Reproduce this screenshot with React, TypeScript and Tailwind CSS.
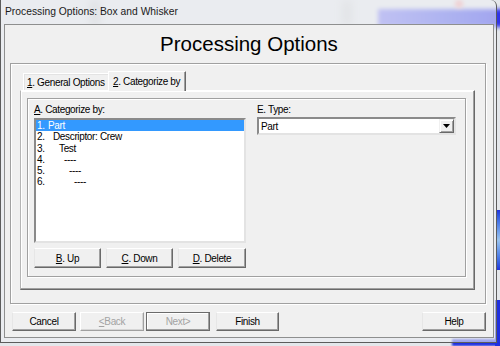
import React from "react";

// list rows in "A. Categorize by"
const rows = [
  { n: "1.", text: "Part", indent: "pl-0", selected: true },
  { n: "2.", text: "Descriptor: Crew", indent: "pl-[5px]", selected: false },
  { n: "3.", text: "Test", indent: "pl-[11px]", selected: false },
  { n: "4.", text: "----", indent: "pl-[16px]", selected: false },
  { n: "5.", text: "----", indent: "pl-[21px]", selected: false },
  { n: "6.", text: "----", indent: "pl-[26px]", selected: false },
];

const Mn = ({ children }: { children: React.ReactNode }) => (
  <span className="underline underline-offset-[1px] decoration-[1px]">{children}</span>
);

const Btn = ({
  children,
  className = "",
  kind = "normal",
}: {
  children: React.ReactNode;
  className?: string;
  kind?: "normal" | "disabled" | "default";
}) => {
  const look =
    kind === "default"
      ? "border-[#6b6b6b] shadow-[inset_-1px_-1px_0_#a0a0a0,inset_1px_1px_0_#fff] text-[#a3a3a3]"
      : kind === "disabled"
      ? "border-t-white border-l-white border-r-[#a0a0a0] border-b-[#a0a0a0] shadow-[inset_-1px_-1px_0_#d6d6d6] text-[#a3a3a3]"
      : "border-t-white border-l-[#e6e6e6] border-r-[#696969] border-b-[#696969] shadow-[inset_-1px_-1px_0_#a0a0a0] text-black";
  return (
    <div
      className={`flex items-center justify-center bg-[#f0f0f0] border text-[10px] tracking-[-0.35px] ${look} ${className}`}
    >
      {children}
    </div>
  );
};

const App = () => {
  return (
    <div className="relative w-[500px] h-[346px] overflow-hidden bg-[#e4e7eb] font-['Liberation_Sans',Arial,sans-serif] text-black">
      {/* blurred desktop behind the glass frame */}
      <div className="absolute right-[-6px] top-[9px] w-[128px] h-[18px] bg-gradient-to-r from-[#7b7bf0] to-[#2d2de8] blur-[2px]" />
      <div className="absolute left-[90px] top-0 w-[10px] h-[26px] bg-[#c9cbce] blur-[4px]" />
      <div className="absolute left-[342px] top-0 w-[10px] h-[26px] bg-[#cfd1d3] blur-[4px]" />
      <div className="absolute left-[455px] top-0 w-[8px] h-[8px] rounded-full bg-[#f0a0a0] blur-[2px]" />
      <div className="absolute right-0 top-[210px] w-[4px] h-[60px] bg-gradient-to-b from-[#2233dd] via-[#9bc4ee] to-[#2233dd]" />
      <div className="absolute right-0 top-[300px] w-[5px] h-[46px] bg-[#1f2fe0]" />
      <div className="absolute right-0 bottom-0 w-[48px] h-[7px] bg-[#1f2fe0] blur-[1px]" />

      {/* window */}
      <div className="relative w-[497px] h-[343px] flex flex-col border-x border-b border-[#5c5c5c] rounded-tr-[6px] bg-[#eef0f3]/60">
        <div className="h-[24px] flex items-center pl-[4px] text-[10.3px] text-[#1a1a1a]">
          Processing Options: Box and Whisker
        </div>

        {/* dialog */}
        <div className="ml-[3px] w-[490px] h-[314px] border border-[#8e8f8f] bg-[#f0f0f0] flex flex-col">
          <div className="h-[38px] flex items-center justify-center text-[20.5px] pt-[1px]">
            Processing Options
          </div>

          {/* outer group box */}
          <div className="ml-[5px] w-[476px] h-[241px] border border-[#a0a0a0] shadow-[inset_1px_1px_0_#fff,1px_1px_0_#fff] flex flex-col">
            {/* tabs */}
            <div className="mt-[7px] h-[19px] ml-[9px] pl-[3px] flex items-end text-[10px] tracking-[-0.35px]">
              <div className="h-[17px] w-[85px] pl-[3px] flex items-center border-t border-l border-white shadow-[inset_1px_1px_0_#e3e3e3]">
                <Mn>1</Mn>. General Options
              </div>
              <div className="relative z-10 -mb-px h-[20px] w-[78px] pl-[4px] flex items-center bg-[#f0f0f0] border-t border-l border-r border-t-white border-l-white border-r-[#696969] shadow-[inset_-1px_0_0_#a0a0a0]">
                <Mn>2</Mn>. Categorize by
              </div>
            </div>

            {/* tab page */}
            <div className="ml-[9px] w-[455px] h-[200px] border border-t-white border-l-[#b4b4b4] border-r-[#696969] border-b-[#696969] shadow-[inset_-1px_-1px_0_#a0a0a0,inset_1px_1px_0_#fff]">
              <div className="ml-[6px] mt-[7px] w-[439px] h-[179px] border border-[#a0a0a0] shadow-[inset_1px_1px_0_#fff,1px_1px_0_#fff] flex pl-[6px] text-[10px] tracking-[-0.35px]">
                {/* left column */}
                <div className="w-[212px] flex flex-col">
                  <div className="h-[19px] pt-[5px] leading-[11px]">
                    <Mn>A</Mn>. Categorize by:
                  </div>
                  <div className="h-[125px] bg-white border-2 border-t-[#8a8a8a] border-l-[#8a8a8a] border-r-[#e3e3e3] border-b-[#e3e3e3] pt-[0px]">
                    {rows.map((r) => (
                      <div
                        key={r.n}
                        className={`h-[11.3px] leading-[11px] flex pl-[1px] ${
                          r.selected ? "bg-[#3399ff] text-white" : ""
                        }`}
                      >
                        <span className="w-[11px] inline-block">{r.n}</span>
                        <span className={r.indent}>{r.text}</span>
                      </div>
                    ))}
                  </div>
                  <div className="mt-[5px] flex gap-[5px]">
                    <Btn className="w-[67px] h-[20px]">
                      <Mn>B</Mn>. Up
                    </Btn>
                    <Btn className="w-[67px] h-[20px]">
                      <Mn>C</Mn>. Down
                    </Btn>
                    <Btn className="w-[68px] h-[20px]">
                      <Mn>D</Mn>. Delete
                    </Btn>
                  </div>
                </div>

                {/* right column */}
                <div className="ml-[11px] w-[199px] flex flex-col">
                  <div className="h-[18px] pt-[5px] leading-[11px]">E. Type:</div>
                  <div className="h-[18px] flex items-center bg-white border-2 border-t-[#8a8a8a] border-l-[#8a8a8a] border-r-[#e3e3e3] border-b-[#e3e3e3]">
                    <span className="flex-1 pl-[2px]">Part</span>
                    <div className="w-[15px] h-[14px] flex items-center justify-center bg-[#f0f0f0] border border-t-[#f0f0f0] border-l-[#f0f0f0] border-r-[#696969] border-b-[#696969] shadow-[inset_1px_1px_0_#fff,inset_-1px_-1px_0_#a0a0a0]">
                      <svg width="7" height="4" viewBox="0 0 7 4">
                        <polygon points="0,0 7,0 3.5,4" fill="#000" />
                      </svg>
                    </div>
                  </div>
                </div>
              </div>
            </div>
          </div>

          {/* wizard buttons */}
          <div className="mt-[8px] h-[19px] pl-[7px] pr-[7px] flex">
            <Btn className="w-[64px] h-[19px]">Cancel</Btn>
            <Btn kind="disabled" className="ml-[4px] w-[64px] h-[19px]">
              <Mn>&lt;</Mn>Back
            </Btn>
            <Btn kind="default" className="ml-[2px] w-[64px] h-[19px]">
              Next&gt;
            </Btn>
            <Btn className="ml-[6px] w-[63px] h-[19px]">Finish</Btn>
            <Btn className="ml-auto w-[64px] h-[19px]">Help</Btn>
          </div>
        </div>
      </div>
    </div>
  );
};

export default App;
